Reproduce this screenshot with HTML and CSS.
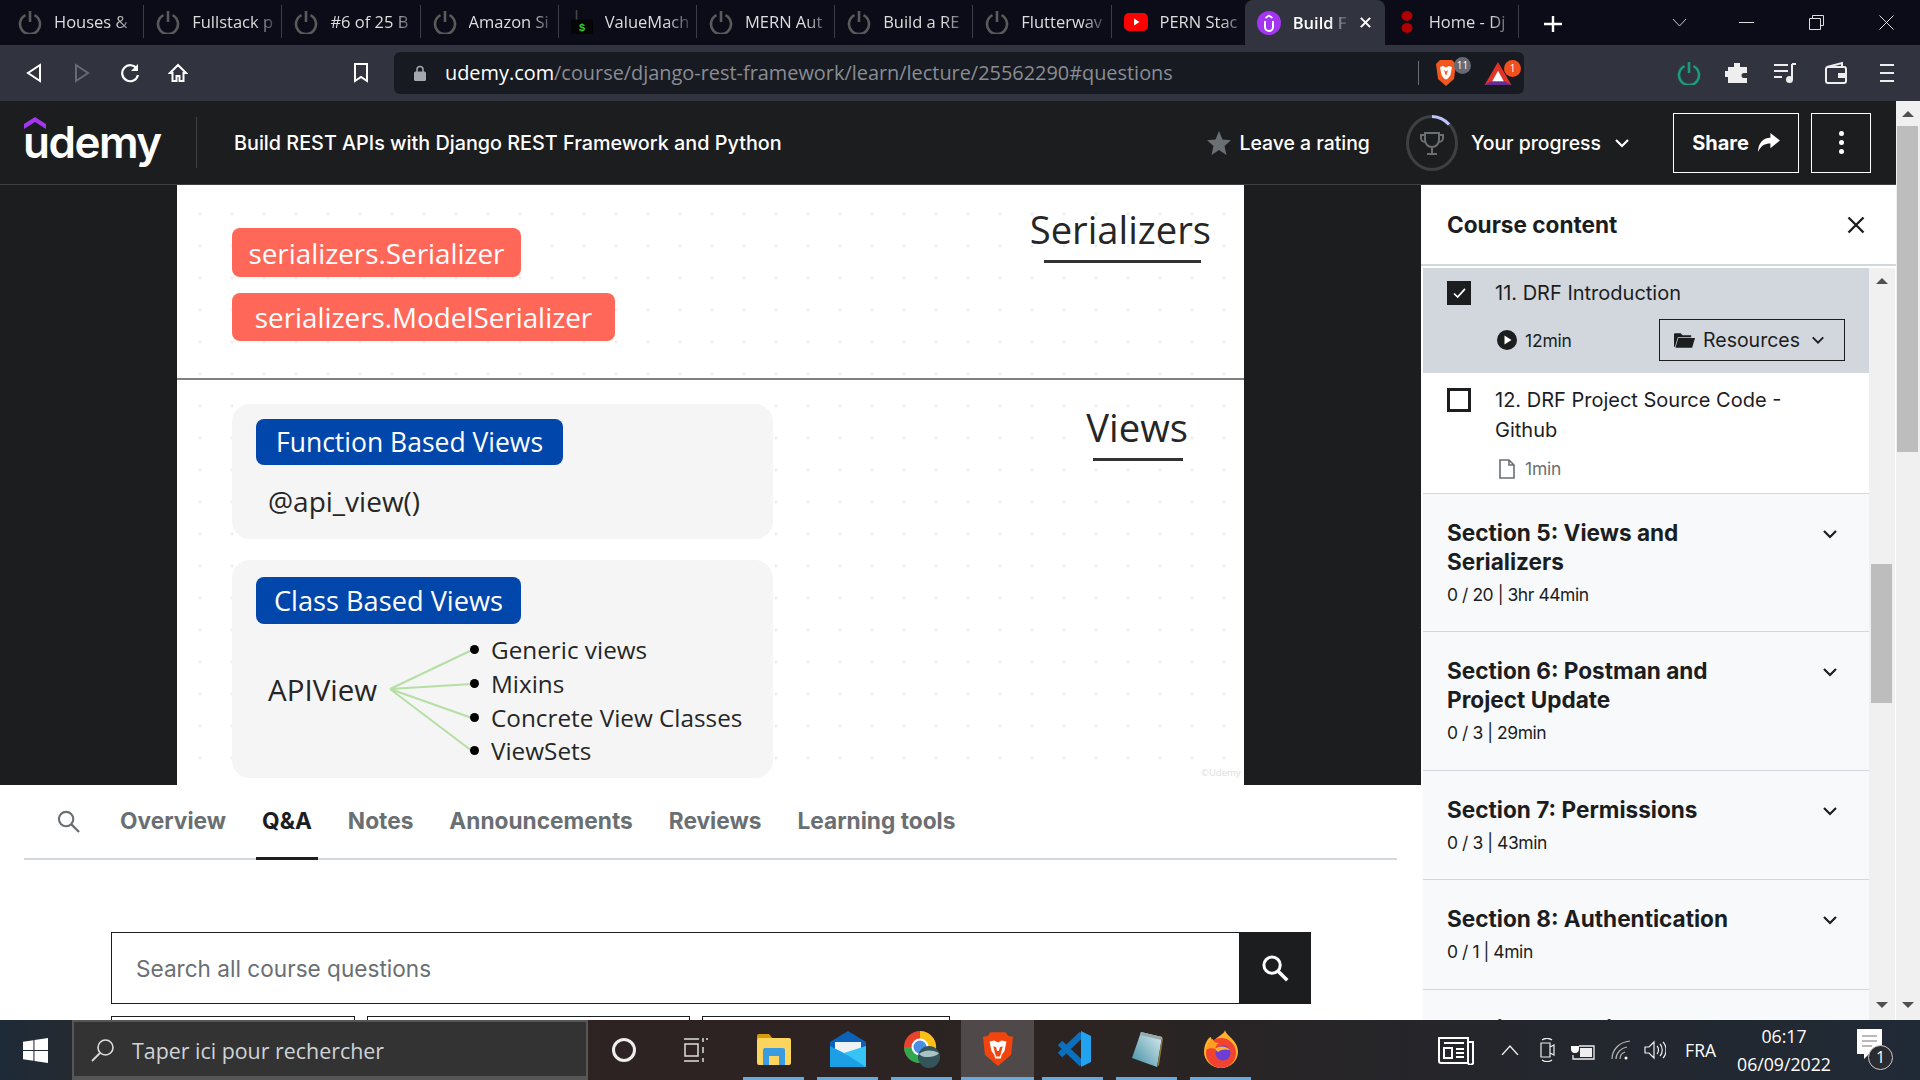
FILE: index.html
```html
<!DOCTYPE html>
<html lang="en">
<head>
    <meta charset="UTF-8">
    <meta name="viewport" content="width=device-width, initial-scale=1.0">
    <title>Build REST APIs with Django REST Framework and Python</title>
    <link rel="stylesheet" href="styles.css">
</head>
<body>
    <!-- icones reutilisees -->
    <svg class="defs" width="0" height="0">
        <symbol id="power" viewBox="0 0 24 24"><path d="M7.5 5.2a10 10 0 1 0 9 0" fill="none" stroke="currentColor" stroke-width="2.6"/><path d="M12 1v11" stroke="currentColor" stroke-width="2.6"/></symbol>
        <symbol id="chev" viewBox="0 0 16 10"><path d="M2 2l6 6 6-6" fill="none" stroke="currentColor" stroke-width="2.2"/></symbol>
    </svg>

    <div class="tabstrip">
        <div class="tab"><svg class="tab-icon off"><use href="#power"/></svg><span class="tab-title">Houses &amp;</span></div>
        <div class="tab"><svg class="tab-icon off"><use href="#power"/></svg><span class="tab-title">Fullstack p</span></div>
        <div class="tab"><svg class="tab-icon off"><use href="#power"/></svg><span class="tab-title">#6 of 25 B</span></div>
        <div class="tab"><svg class="tab-icon off"><use href="#power"/></svg><span class="tab-title">Amazon Si</span></div>
        <div class="tab"><svg class="tab-icon tab-term" viewBox="0 0 20 22"><path d="M5 0v9" stroke="#444" stroke-width="1.500"/><rect y="9" width="20" height="13" fill="#050505"/><text x="10" y="19.500" class="dollar">$</text></svg><span class="tab-title">ValueMach</span></div>
        <div class="tab"><svg class="tab-icon off"><use href="#power"/></svg><span class="tab-title">MERN Aut</span></div>
        <div class="tab"><svg class="tab-icon off"><use href="#power"/></svg><span class="tab-title">Build a RE</span></div>
        <div class="tab"><svg class="tab-icon off"><use href="#power"/></svg><span class="tab-title">Flutterwav</span></div>
        <div class="tab"><svg class="tab-icon" viewBox="0 0 24 24"><rect y="3" width="24" height="18" rx="5" fill="#f00"/><path d="M10 8.500l5.500 3.500-5.500 3.500z" fill="#fff"/></svg><span class="tab-title">PERN Stac</span></div>
        <div class="tab tab-active"><svg class="tab-icon" viewBox="0 0 24 24"><circle cx="12" cy="12" r="12" fill="#a435f0"/><path d="M8 10v6a4 4 0 0 0 8 0v-6" fill="none" stroke="#fff" stroke-width="2"/><path d="M8.500 7l3.500-2.500 3.500 2.500" fill="none" stroke="#fff" stroke-width="1.600"/></svg><span class="tab-title">Build F</span>
            <svg class="tab-close" viewBox="0 0 14 14"><path d="M2 2l10 10M12 2l-10 10" stroke="#fff" stroke-width="2.200"/></svg></div>
        <div class="tab tab-last"><svg class="tab-dots" viewBox="0 0 12 22"><ellipse cx="6" cy="5" rx="5.500" ry="5" fill="#b00000"/><ellipse cx="6" cy="17" rx="5.500" ry="5" fill="#b00000"/></svg><span class="tab-title">Home - Dj</span></div>
        <svg class="newtab" viewBox="0 0 18 16"><path d="M9 0v16M0 8h18" stroke="#fff" stroke-width="2.400"/></svg>
        <div class="caption">
            <svg class="cap-chev" viewBox="0 0 15 9"><path d="M1 1l6.500 7 6.500-7" fill="none" stroke="#ccc"/></svg>
            <svg class="cap-btn" viewBox="0 0 15 15"><path d="M0 7.500h15" stroke="#ddd"/></svg>
            <svg class="cap-btn" viewBox="0 0 15 15"><path d="M3.500 3V.5h11v10H12M.5 3.500h11v11H.5z" fill="none" stroke="#ddd"/></svg>
            <svg class="cap-btn" viewBox="0 0 15 15"><path d="M.5.5l14 14M14.500.5l-14 14" stroke="#ddd"/></svg>
        </div>
    </div>

    <div class="toolbar">
        <svg class="tb-nav" viewBox="0 0 18 20"><path d="M15 2L3 10l12 8z" fill="none" stroke="#fff" stroke-width="2"/></svg>
        <svg class="tb-nav" viewBox="0 0 18 20"><path d="M3 2l12 8-12 8z" fill="none" stroke="#666a75" stroke-width="2"/></svg>
        <svg class="tb-nav" viewBox="0 0 20 20"><path d="M17 6a8 8 0 1 0 1 6" fill="none" stroke="#fff" stroke-width="2.200"/><path d="M18 1v7h-7z" fill="#fff"/></svg>
        <svg class="tb-nav" viewBox="0 0 20 20"><path d="M10 2L2 10h2.500v8h4v-5h3v5h4v-8H18z" fill="none" stroke="#fff" stroke-width="2"/></svg>
        <svg class="tb-mark" viewBox="0 0 16 20"><path d="M2 1h12v17l-6-4-6 4z" fill="none" stroke="#fff" stroke-width="2"/></svg>
        <div class="urlbar">
            <svg class="lock" viewBox="0 0 12 16"><path d="M3 7V4.500a3 3 0 0 1 6 0V7" fill="none" stroke="#a5a7ad" stroke-width="1.500"/><rect y="6.500" width="12" height="9.500" rx="1.500" fill="#a5a7ad"/></svg>
            <span class="url"><b>udemy.com</b>/course/django-rest-framework/learn/lecture/25562290#questions</span>
            <span class="url-sep"></span>
            <div class="ext">
                <svg class="ext-lion" viewBox="0 0 22 28"><path d="M5 1h12l4 4-2 15-8 7-8-7L1 5z" fill="#f1571f"/><path d="M5 8l3-1 3 1.500L14 7l3 1-1.500 8-2.500 3.500-2 1-2-1L6.500 16z" fill="#fff"/><path d="M9 11l2 1.500 2-1.500-2 6z" fill="#f1571f"/></svg>
                <span class="ext-badge badge-grey">11</span>
            </div>
            <div class="ext">
                <svg class="ext-tri" viewBox="0 0 28 24"><path d="M14 0l14 24H0z" fill="#e0342a"/><path d="M0 24l7-4h14l7 4z" fill="#662d91"/><path d="M14 9l6 11H8z" fill="#fff"/></svg>
                <span class="ext-badge badge-orange">1</span>
            </div>
        </div>
        <svg class="tb-power"><use href="#power"/></svg>
        <svg class="tb-icon" viewBox="0 0 24 24"><path d="M9 2h6v4h7v6h-3a2.500 2.500 0 0 0 0 5h3v5H3v-6H1a3 3 0 0 1 0-6h2V6h6z" fill="#eee"/></svg>
        <svg class="tb-icon tb-list" viewBox="0 0 24 24"><path d="M1 4h14M1 10h14M1 16h8" stroke="#eee" stroke-width="2"/><path d="M19 3h4M19 3v15" stroke="#eee" stroke-width="2" fill="none"/><circle cx="16.500" cy="18.500" r="3.500" fill="#eee"/></svg>
        <svg class="tb-icon" viewBox="0 0 24 24"><path d="M3 6l15-4v4M2 8a2 2 0 0 1 2-2h16a2 2 0 0 1 2 2v12a2 2 0 0 1-2 2H4a2 2 0 0 1-2-2z" fill="none" stroke="#eee" stroke-width="2"/><path d="M14 12h9v5h-9z" fill="#eee"/></svg>
        <svg class="tb-menu" viewBox="0 0 14 20"><path d="M0 2h14M0 10h14M0 18h14" stroke="#eee" stroke-width="2.200"/></svg>
    </div>

    <div class="page">
        <div class="page-main">
            <header class="course-bar">
                <div class="logo">
                    <svg class="logo-mark" viewBox="0 0 22 12"><path d="M11 0l11 7v5L11 5 0 12V7z" fill="#a435f0"/></svg>
                    <span class="logo-word">udemy</span>
                </div>
                <h1 class="course-title">Build REST APIs with Django REST Framework and Python</h1>
                <span class="bar-link rating"><svg class="star" viewBox="0 0 24 24"><path d="M12 0l3.500 8.500 8.500.7-6.500 5.700 2 9L12 19l-7.500 4.900 2-9L0 9.200l8.500-.7z" fill="#6a6f73"/></svg>Leave a rating</span>
                <svg class="ring" viewBox="0 0 52 56">
                    <ellipse cx="26" cy="28" rx="24.500" ry="26.500" fill="none" stroke="#3e4143" stroke-width="3"/>
                    <path d="M26 1.500a24.500 26.500 0 0 1 17 8" fill="none" stroke="#c0c4fc" stroke-width="3"/>
                    <path d="M19 18h14v7a7 7 0 0 1-14 0zM26 32v6M21 39h10M19 20h-4v3a4 4 0 0 0 4 4M33 20h4v3a4 4 0 0 1-4 4" fill="none" stroke="#6a6f73" stroke-width="2"/>
                </svg>
                <span class="bar-link progress">Your progress<svg class="bar-chev"><use href="#chev"/></svg></span>
                <button class="btn-share">Share<svg class="share-arrow" viewBox="0 0 24 20"><path d="M14 0l10 8-10 8v-5C8 11 4 13 1 20 1 11 6 5 14 5z" fill="#fff"/></svg></button>
                <button class="btn-more"><i></i><i></i><i></i></button>
            </header>

            <div class="content">
                <div class="left">
                    <div class="video">
                        <div class="slide">
                            <section class="slide-part part-top">
                                <div class="slide-col">
                                    <div class="pill pill-red pill-a">serializers.Serializer</div>
                                    <div class="pill pill-red pill-b">serializers.ModelSerializer</div>
                                </div>
                                <div class="slide-head head-a">Serializers</div>
                            </section>
                            <section class="slide-part part-bottom">
                                <div class="slide-col">
                                    <div class="panel panel-a">
                                        <div class="pill pill-blue pill-c">Function Based Views</div>
                                        <div class="api-view">@api_view()</div>
                                    </div>
                                    <div class="panel panel-b">
                                        <div class="pill pill-blue pill-d">Class Based Views</div>
                                        <div class="tree">
                                            <span class="tree-root">APIView</span>
                                            <svg class="tree-lines" viewBox="0 0 90 110"><path d="M2 44L84 5M2 44l82-5M2 44l82 29M2 44l82 62" fill="none" stroke="#b5dfa4" stroke-width="2"/></svg>
                                            <ul class="tree-list">
                                                <li>Generic views</li>
                                                <li>Mixins</li>
                                                <li>Concrete View Classes</li>
                                                <li>ViewSets</li>
                                            </ul>
                                        </div>
                                    </div>
                                </div>
                                <div class="slide-head head-b">Views</div>
                            </section>
                            <span class="watermark">©Udemy</span>
                        </div>
                    </div>

                    <nav class="course-tabs">
                        <svg class="tabs-search" viewBox="0 0 24 24"><circle cx="9.500" cy="9.500" r="7.500" fill="none" stroke="#6a6f73" stroke-width="2.200"/><path d="M15 15l8 8" stroke="#6a6f73" stroke-width="2.400"/></svg>
                        <a class="ctab">Overview</a>
                        <a class="ctab ctab-active">Q&amp;A</a>
                        <a class="ctab">Notes</a>
                        <a class="ctab">Announcements</a>
                        <a class="ctab">Reviews</a>
                        <a class="ctab">Learning tools</a>
                    </nav>

                    <div class="qa">
                        <div class="qa-search">
                            <span class="qa-input">Search all course questions</span>
                            <span class="qa-btn"><svg viewBox="0 0 24 24" width="28" height="28"><circle cx="9.500" cy="9.500" r="7" fill="none" stroke="#fff" stroke-width="2.600"/><path d="M14.500 14.500l8 8" stroke="#fff" stroke-width="3"/></svg></span>
                        </div>
                        <div class="qa-filters">
                            <span class="filter f1"></span>
                            <span class="filter f2"></span>
                            <span class="filter f3"></span>
                        </div>
                    </div>
                </div>

                <aside class="sidebar">
                    <div class="side-head">
                        <h2>Course content</h2>
                        <svg class="side-close" viewBox="0 0 18 18"><path d="M1.500 1.500l15 15M16.500 1.500l-15 15" stroke="#1c1d1f" stroke-width="2.400"/></svg>
                    </div>
                    <div class="side-body">
                        <div class="side-list">
                            <div class="lecture lecture-on">
                                <span class="check check-on"><svg viewBox="0 0 14 12" width="13" height="11"><path d="M1 6l4 4 8-9" fill="none" stroke="#fff" stroke-width="1.800"/></svg></span>
                                <div class="lecture-text">
                                    <div class="lecture-name">11. DRF Introduction</div>
                                    <div class="lecture-meta">
                                        <span class="meta-dur dark"><svg viewBox="0 0 20 20" width="20" height="20"><circle cx="10" cy="10" r="10" fill="#1c1d1f"/><path d="M7.500 5.500l7 4.500-7 4.500z" fill="#fff"/></svg>12min</span>
                                        <span class="res-btn"><svg viewBox="0 0 22 16" width="21" height="16"><path d="M0 2a1 1 0 0 1 1-1h6l2 2h9v2H4L1 15H0z" fill="#1c1d1f"/><path d="M4.500 6H22l-3 10H1.500z" fill="#1c1d1f"/></svg>Resources<svg class="res-chev"><use href="#chev"/></svg></span>
                                    </div>
                                </div>
                            </div>
                            <div class="lecture">
                                <span class="check"></span>
                                <div class="lecture-text">
                                    <div class="lecture-name">12. DRF Project Source Code - Github</div>
                                    <div class="lecture-meta">
                                        <span class="meta-dur"><svg class="file-icon" viewBox="0 0 16 20" width="16" height="20"><path d="M1 1h9l5 5v13H1zM10 1v5h5" fill="none" stroke="#6a6f73" stroke-width="1.600"/></svg>1min</span>
                                    </div>
                                </div>
                            </div>
                            <div class="section"><div><h3>Section 5: Views and Serializers</h3><p>0 / 20 | 3hr 44min</p></div><svg class="sec-chev"><use href="#chev"/></svg></div>
                            <div class="section"><div><h3>Section 6: Postman and Project Update</h3><p>0 / 3 | 29min</p></div><svg class="sec-chev"><use href="#chev"/></svg></div>
                            <div class="section"><div><h3>Section 7: Permissions</h3><p>0 / 3 | 43min</p></div><svg class="sec-chev"><use href="#chev"/></svg></div>
                            <div class="section"><div><h3>Section 8: Authentication</h3><p>0 / 1 | 4min</p></div><svg class="sec-chev"><use href="#chev"/></svg></div>
                            <div class="section"><div><h3>Section 9: Redis</h3></div><svg class="sec-chev"><use href="#chev"/></svg></div>
                        </div>
                        <div class="scrollbar side-scroll">
                            <i class="arrow-up"></i><i class="thumb side-thumb"></i><i class="arrow-down"></i>
                        </div>
                    </div>
                </aside>
            </div>
        </div>
        <div class="scrollbar page-scroll">
            <i class="arrow-up"></i><i class="thumb page-thumb"></i><i class="arrow-down"></i>
        </div>
    </div>

    <footer class="taskbar">
        <div class="start"><svg viewBox="0 0 24 24" width="25" height="25"><path d="M0 3.500l10-1.400V11.500H0zM11 2l13-2v11.500H11zM0 12.500h10v9.400L0 20.500zM11 12.500h13V24l-13-1.900z" fill="#fff"/></svg></div>
        <div class="win-search">
            <svg viewBox="0 0 24 24" width="24" height="24"><circle cx="14.500" cy="9.500" r="7.500" fill="none" stroke="#ddd" stroke-width="1.600"/><path d="M9 15l-8 8" stroke="#ddd" stroke-width="1.800"/></svg>
            <span>Taper ici pour rechercher</span>
        </div>
        <span class="cortana"></span>
        <svg class="taskview" viewBox="0 0 24 24"><path d="M0 1h15M0 23h15M1 6h13v12H1zM19 0v4M19 9v6M19 20v4M22 1h2" fill="none" stroke="#ddd" stroke-width="1.500"/></svg>
        <div class="app app-on"><svg viewBox="0 0 34 32" width="34" height="32"><path d="M0 3a2 2 0 0 1 2-2h10l4 5H0z" fill="#d99a0c"/><rect y="5" width="34" height="27" rx="2" fill="#fcd55f"/><path d="M6 32V17a2 2 0 0 1 2-2h18a2 2 0 0 1 2 2v15h-6v-9H12v9z" fill="#3a9be0"/></svg></div>
        <div class="app app-on"><svg viewBox="0 0 36 36" width="36" height="36"><path d="M18 0l18 11v25H0V11z" fill="#0b62b8"/><path d="M5 11h26v8L18 25 5 19z" fill="#eef3f6"/><path d="M0 15l18 9 18-9v21H0z" fill="#1d9fe6"/><path d="M36 15v21L14 22z" fill="#34c5f6"/></svg></div>
        <div class="app app-on"><svg viewBox="0 0 38 38" width="38" height="38"><circle cx="17" cy="17" r="16" fill="#e8432f"/><path d="M17 17L3.100 25A16 16 0 0 0 24 31.400L17 17z" fill="#2da94f"/><path d="M17 1a16 16 0 0 1 14.500 23L17 17z" fill="#fbc116"/><path d="M17 17L1 17A16 16 0 0 0 3.100 25z" fill="#2da94f"/><circle cx="17" cy="17" r="7.500" fill="#4a8fe6" stroke="#fff" stroke-width="2"/><circle cx="26" cy="27" r="11" fill="#34545c"/><path d="M16 24c5-4 12-5 20-1-2 3-8 4-11 4-3 0-6 0-9-3z" fill="#a9c4c4"/></svg></div>
        <div class="app app-on app-cur"><svg viewBox="0 0 32 36" width="30" height="36"><path d="M8 0h16l3 4 5 1-2 19-14 12L2 24 0 5l5-1z" fill="#f1440f"/><path d="M7 10l5-1 4 2 4-2 5 1-2 10-3 4-1 4h-6l-1-4-3-4z" fill="#fff"/><path d="M11 15l3 1 1 4h2l1-4 3-1-2 8-1 3h-4l-1-3z" fill="#f1440f"/></svg></div>
        <div class="app app-on"><svg viewBox="0 0 36 36" width="36" height="36"><path d="M27 3L5 24" stroke="#0b6fbb" stroke-width="6.500"/><path d="M5 12l22 21" stroke="#0b6fbb" stroke-width="6.500"/><path d="M26 0l10 5v26l-10 5z" fill="#22a2ef"/></svg></div>
        <div class="app app-on"><svg viewBox="0 0 32 36" width="32" height="36"><defs><linearGradient id="pad" x1="0" y1="1" x2="1" y2="0"><stop offset="0" stop-color="#3f8ea3"/><stop offset="1" stop-color="#dfeef2"/></linearGradient></defs><path d="M10 1l21 5-5 30-25-9z" fill="url(#pad)"/><path d="M26 36l5-30 1 2-4 26z" fill="#8a7a3a"/><path d="M10 1l21 5-1 3-21-5z" fill="#9aa8ac"/></svg></div>
        <div class="app app-on"><svg viewBox="0 0 34 38" width="34" height="38"><path d="M21 0c1 6 13 10 13 22a17 16 0 0 1-34 0C0 13 5 7 7 7c0 3 3 5 3 5 2-6 10-7 11-12z" fill="#ffb02e"/><circle cx="17" cy="23" r="15" fill="#f2432f"/><path d="M2 20C3 12 8 9 9 9c0 3 3 4 6 4-3 2-4 4-3 6-4-1-7-1-10 1z" fill="#ff9f1f"/><circle cx="19" cy="23" r="7.500" fill="#6b3fd4"/><path d="M11 19c4-4 12-3 15 1-4-1-9-1-12 2z" fill="#ffb02e"/></svg></div>
        <div class="tray">
            <svg class="tray-news" viewBox="0 0 36 30"><path d="M1 3h29v25H3a2 2 0 0 1-2-2zM30 7h5v19a2 2 0 0 1-5 2" fill="none" stroke="#fff" stroke-width="2"/><path d="M6 8h20M6 13h8v10H6zM18 14h8M18 18h8M18 22h8" fill="none" stroke="#fff" stroke-width="2"/></svg>
            <svg class="tray-up" viewBox="0 0 18 10"><path d="M1 10l8-9 8 9" fill="none" stroke="#eee" stroke-width="1.300"/></svg>
            <svg class="tray-cam" viewBox="0 0 16 24"><path d="M2 5h9v14H2zM11 9l4-2v10l-4-2M3 2c3-2 7-2 10 0M3 22c3 2 7 2 10 0" fill="none" stroke="#eee" stroke-width="1.200"/></svg>
            <svg class="tray-bat" viewBox="0 0 26 20"><path d="M3 0v6M7 0v6M1 6h8v3a4 4 0 0 1-8 0z" fill="#fff"/><path d="M9 6h15v13H3v-4" fill="none" stroke="#eee" stroke-width="1.300"/><rect x="10" y="8" width="12" height="9" fill="#eee"/></svg>
            <svg class="tray-wifi" viewBox="0 0 20 20"><path d="M1 19C1 10 8 2 19 1M5 19c0-6 5-11 11-12M9 19c0-4 2-6 5-7" fill="none" stroke="#bbb" stroke-width="1.200"/><circle cx="15" cy="18" r="1.500" fill="#fff"/></svg>
            <svg class="tray-vol" viewBox="0 0 22 20"><path d="M1 7h4l5-5v16l-5-5H1zM13 6c2 2 2 6 0 8M16 4c3 3 3 9 0 12M19 2c4 4 4 12 0 16" fill="none" stroke="#eee" stroke-width="1.200"/></svg>
            <span class="tray-lang">FRA</span>
            <div class="clock"><span>06:17</span><span>06/09/2022</span></div>
            <div class="notif">
                <svg viewBox="0 0 25 30" width="25" height="30"><path d="M0 0h25v25H12l-5 5v-5H0z" fill="#fff"/><path d="M5 7h15M5 12h15M5 17h10" stroke="#777" stroke-width="1.200"/></svg>
                <span class="notif-badge">1</span>
            </div>
        </div>
    </footer>
</body>
</html>
```

FILE: styles.css
```css
* {
    box-sizing: border-box;
}
html, body {
    margin: 0;
    width: 1920px;
    height: 1080px;
    overflow: hidden;
}
body {
    display: flex;
    flex-direction: column;
    font-family: Inter, "Liberation Sans", sans-serif;
    color: #1c1d1f;
    background: #fff;
}
.defs {
    position: absolute;
}
h1, h2, h3, p, ul {
    margin: 0;
    padding: 0;
}

/* onglets du navigateur */
.tabstrip {
    flex: none;
    height: 45px;
    background: #0b0c18;
    display: flex;
    align-items: stretch;
    padding-left: 6px;
    font-family: "Open Sans", sans-serif;
    font-size: 16.5px;
    color: #ddd;
}
.tab {
    width: 138.2px;
    display: flex;
    align-items: center;
    gap: 12px;
    padding-left: 12px;
    position: relative;
    border-right: 1px solid #3a3c46;
    margin: 5px 0 7px;
}
.tab-icon {
    flex: none;
    width: 24px;
    height: 24px;
}
.tab-icon.off {
    color: #5a5a5a;
}
.tab-term {
    width: 22px;
}
.tab-dots {
    flex: none;
    width: 12px;
    height: 22px;
    margin: 0 4px;
}
.tab-title {
    flex: 1;
    min-width: 0;
    white-space: nowrap;
    -webkit-mask-image: linear-gradient(90deg, #000 68%, rgba(0, 0, 0, .25) 92%);
    mask-image: linear-gradient(90deg, #000 68%, rgba(0, 0, 0, .25) 92%);
}
.tab-active {
    width: 140px;
    margin: 0 0 0 -5px;
    background: #31343f;
    border: 0;
    border-radius: 8px 8px 0 0;
    color: #fff;
    font-weight: 600;
    padding-right: 13px;
}
.tab-close {
    flex: none;
    width: 13px;
    height: 13px;
}
.tab-last {
    width: 134px;
}
.dollar {
    font: 700 10px "Liberation Mono", monospace;
    fill: #2fd12f;
    text-anchor: middle;
}
.newtab {
    width: 18px;
    height: 16px;
    margin: 16px 0 0 25px;
}
.caption {
    margin-left: auto;
    display: flex;
    align-items: center;
    gap: 55px;
    padding-right: 26px;
}
.cap-chev {
    width: 15px;
    height: 9px;
    margin-right: -3px;
}
.cap-btn {
    width: 15px;
    height: 15px;
}

/* barre d'adresse */
.toolbar {
    flex: none;
    height: 56px;
    background: #31343f;
    display: flex;
    align-items: center;
    padding-left: 24px;
}
.tb-nav {
    width: 20px;
    height: 20px;
    margin-right: 28px;
}
.tb-mark {
    width: 16px;
    height: 20px;
    margin-left: 137px;
}
.urlbar {
    width: 1130px;
    height: 42px;
    margin-left: 25px;
    background: #181a21;
    border-radius: 6px;
    display: flex;
    align-items: center;
    padding-left: 20px;
}
.lock {
    width: 12px;
    height: 16px;
}
.url {
    margin-left: 19px;
    padding-bottom: 2px;
    font-family: "Open Sans", sans-serif;
    font-size: 19.9px;
    color: #8a8d94;
    white-space: nowrap;
    width: 973px;
}
.url b {
    font-weight: 400;
    color: #fff;
}
.url-sep {
    width: 1px;
    height: 24px;
    background: #6a6d75;
}
.ext {
    position: relative;
    margin-left: 16px;
    display: flex;
}
.ext + .ext {
    margin-left: 27px;
}
.ext-lion {
    width: 22px;
    height: 28px;
}
.ext-tri {
    width: 28px;
    height: 23px;
}
.ext-badge {
    position: absolute;
    top: -2px;
    right: -14px;
    width: 17px;
    height: 17px;
    border-radius: 50%;
    font: 10px "Open Sans", sans-serif;
    color: #fff;
    text-align: center;
    line-height: 17px;
}
.badge-grey {
    background: #666a75;
}
.badge-orange {
    background: #f1501c;
    right: -9px;
}
.tb-power {
    width: 24px;
    height: 24px;
    color: #1a9b7b;
    margin-left: 153px;
}
.tb-icon {
    width: 24px;
    height: 24px;
    margin-left: 24px;
}
.tb-icon + .tb-icon {
    margin-left: 27px;
}
.tb-icon + .tb-list {
    margin-left: 24px;
}
.tb-menu {
    width: 14px;
    height: 20px;
    margin-left: 32px;
}

/* page */
.page {
    flex: none;
    height: 919px;
    display: flex;
}
.page-main {
    flex: 1;
    min-width: 0;
    display: flex;
    flex-direction: column;
}
.course-bar {
    flex: none;
    height: 84px;
    background: #1c1d1f;
    border-bottom: 1px solid #3e4143;
    display: flex;
    align-items: center;
    color: #fff;
    font-size: 19.4px;
    font-weight: 500;
}
.logo {
    width: 174px;
    height: 51px;
    margin-left: 23px;
    border-right: 1px solid #3e4143;
    position: relative;
    display: flex;
    align-items: flex-end;
}
.logo-mark {
    position: absolute;
    left: 1px;
    top: 0;
    width: 22px;
    height: 12px;
}
.logo-word {
    font-size: 44px;
    font-weight: 600;
    line-height: 50px;
    letter-spacing: -1.5px;
    margin-bottom: 1px;
}
.course-title {
    font-size: 19.8px;
    font-weight: 500;
    margin-left: 37px;
    white-space: nowrap;
}
.bar-link {
    display: flex;
    align-items: center;
    white-space: nowrap;
}
.rating {
    margin-left: auto;
    gap: 8px;
}
.star {
    width: 26px;
    height: 24px;
}
.ring {
    width: 52px;
    height: 56px;
    margin-left: 36px;
}
.progress {
    margin-left: 13px;
}
.bar-chev {
    width: 16px;
    height: 10px;
    margin-left: 13px;
}
.btn-share {
    width: 126px;
    height: 60px;
    margin-left: 43px;
    background: none;
    border: 1px solid #fff;
    color: #fff;
    font: 700 20px Inter, sans-serif;
    display: flex;
    align-items: center;
    justify-content: center;
    gap: 8px;
}
.share-arrow {
    width: 23px;
    height: 19px;
}
.btn-more {
    width: 60px;
    height: 60px;
    margin: 0 25px 0 12px;
    background: none;
    border: 1px solid #fff;
    display: flex;
    flex-direction: column;
    align-items: center;
    justify-content: center;
    gap: 4px;
    padding: 0;
}
.btn-more i {
    width: 5px;
    height: 5px;
    border-radius: 50%;
    background: #fff;
}
.content {
    flex: 1;
    min-height: 0;
    display: flex;
}
.left {
    width: 1421px;
    flex: none;
    overflow: hidden;
}

/* video : la diapo */
.video {
    height: 600px;
    background: #1c1d1f;
    display: flex;
    justify-content: center;
}
.slide {
    width: 1067px;
    height: 600px;
    position: relative;
    background-color: #fff;
    background-image: radial-gradient(circle at 2px 2px, #ececec 1.2px, transparent 1.8px);
    background-size: 32px 32px;
    background-position: 21px 27px;
    font-family: "Open Sans", sans-serif;
    overflow: hidden;
}
.slide-part {
    display: flex;
    justify-content: space-between;
    padding-left: 55px;
}
.part-top {
    height: 195px;
    border-bottom: 2px solid #808080;
    padding-top: 43px;
}
.part-bottom {
    padding-top: 24px;
}
.slide-col {
    display: flex;
    flex-direction: column;
    align-items: flex-start;
}
.pill {
    color: #fff;
    border-radius: 8px;
    font-size: 27px;
    display: flex;
    align-items: center;
    justify-content: center;
    white-space: nowrap;
}
.pill-red {
    background: #ff6859;
    font-size: 27.8px;
}
.pill-a {
    width: 289px;
    height: 49px;
}
.pill-b {
    width: 383px;
    height: 48px;
    margin-top: 16px;
}
.pill-blue {
    background: #0147ab;
}
.pill-c {
    width: 307px;
    height: 46px;
    font-size: 26.5px;
}
.pill-d {
    width: 265px;
    height: 47px;
    font-size: 27.2px;
}
.panel {
    width: 541px;
    background: #f5f5f5;
    border-radius: 18px;
    padding-left: 24px;
}
.panel-a {
    height: 135px;
    padding-top: 15px;
}
.panel-b {
    height: 218px;
    margin-top: 21px;
    padding-top: 17px;
}
.api-view {
    margin: 16px 0 0 12px;
    font-size: 28px;
    line-height: 40px;
    color: #262626;
}
.tree {
    display: flex;
    align-items: center;
    margin-top: 9px;
    padding-left: 12px;
    color: #262626;
}
.tree-root {
    font-size: 29.5px;
    width: 122px;
    margin-bottom: 23px;
}
.tree-lines {
    position: absolute;
    left: 211px;
    top: 460px;
    width: 90px;
    height: 110px;
}
.tree-list {
    list-style: none;
    margin-left: 101px;
    font-size: 24.3px;
    line-height: 33.8px;
    white-space: nowrap;
}
.tree-list li {
    position: relative;
}
.tree-list li::before {
    content: "";
    position: absolute;
    left: -21px;
    top: 12px;
    width: 9px;
    height: 9px;
    border-radius: 50%;
    background: #000;
}
.slide-head {
    font-size: 38.2px;
    line-height: 53px;
    height: 53px;
    color: #262626;
    text-align: center;
    white-space: nowrap;
    position: relative;
    align-self: flex-start;
}
.slide-head::after {
    content: "";
    position: absolute;
    bottom: -6.5px;
    height: 3px;
    background: #333;
}
.head-a {
    margin: -25px 33px 0 0;
}
.head-a::after {
    left: 14px;
    right: 10px;
}
.head-b {
    margin: -3px 56px 0 0;
}
.head-b::after {
    left: 7px;
    right: 5px;
}
.watermark {
    position: absolute;
    left: 1024px;
    top: 581px;
    font-size: 9.5px;
    color: #ddd;
}

/* onglets du cours */
.course-tabs {
    height: 75px;
    margin: 0 24px;
    border-bottom: 2px solid #d1d7dc;
    display: flex;
    align-items: stretch;
    font-size: 22.7px;
    font-weight: 700;
    color: #6a6f73;
    padding-left: 33px;
}
.tabs-search {
    width: 23px;
    height: 23px;
    margin: 25px 34px 0 0;
}
.ctab {
    padding: 0 6px 1px;
    margin-right: 24px;
    display: flex;
    align-items: center;
    margin-bottom: -2px;
    border-bottom: 3px solid transparent;
    white-space: nowrap;
}
.ctab-active {
    color: #1c1d1f;
    border-bottom-color: #1c1d1f;
}
.qa {
    padding: 72px 0 0 111px;
}
.qa-search {
    width: 1200px;
    height: 72px;
    border: 1px solid #1c1d1f;
    display: flex;
    align-items: center;
}
.qa-input {
    flex: 1;
    padding-left: 24px;
    font-size: 22.6px;
    color: #6a6f73;
}
.qa-btn {
    width: 72px;
    height: 72px;
    background: #1c1d1f;
    display: flex;
    align-items: center;
    justify-content: center;
    margin-right: -1px;
}
.qa-filters {
    display: flex;
    gap: 12px;
    margin-top: 12px;
}
.filter {
    height: 60px;
    border: 1px solid #1c1d1f;
}
.f1 {
    width: 244px;
}
.f2 {
    width: 323px;
}
.f3 {
    width: 248px;
}

/* panneau de droite */
.sidebar {
    flex: 1;
    min-width: 0;
    display: flex;
    flex-direction: column;
    padding-left: 2px;
    padding-right: 1px;
    overflow: hidden;
}
.side-head {
    flex: none;
    height: 81px;
    margin-left: -2px;
    margin-right: -1px;
    padding: 0 31px 0 26px;
    border-bottom: 2px solid #d1d7dc;
    display: flex;
    align-items: center;
    justify-content: space-between;
}
.side-head h2 {
    font-size: 22.6px;
    font-weight: 700;
}
.side-close {
    width: 18px;
    height: 18px;
}
.side-body {
    flex: 1;
    min-height: 0;
    display: flex;
    padding-top: 2px;
}
.side-list {
    flex: 1;
    min-width: 0;
    overflow: hidden;
}
.lecture {
    display: flex;
    padding: 15px 24px 0;
    background: #fff;
    gap: 24px;
    border-bottom: 1px solid #d1d7dc;
    height: 121px;
}
.lecture-on {
    background: #d1d7dc;
    height: 105px;
    border-bottom: 0;
    padding-top: 13px;
}
.check {
    flex: none;
    width: 24px;
    height: 24px;
    border: 3px solid #1c1d1f;
    display: flex;
    align-items: center;
    justify-content: center;
}
.check-on {
    background: #1c1d1f;
}
.lecture-text {
    flex: 1;
    min-width: 0;
    margin-top: -3px;
}
.lecture-name {
    font-size: 20px;
    line-height: 30px;
    max-width: 300px;
}
.lecture-on .lecture-name {
    max-width: none;
}
.lecture-meta {
    display: flex;
    align-items: center;
    justify-content: space-between;
    margin-top: 13px;
}
.lecture-on .lecture-meta {
    margin-top: 11px;
}
.meta-dur {
    display: flex;
    align-items: center;
    gap: 8px;
    font-size: 17.5px;
    letter-spacing: -.2px;
    color: #6a6f73;
    padding-left: 2px;
}
.meta-dur.dark {
    color: #1c1d1f;
}
.file-icon {
    margin: 0 2px;
}
.res-btn {
    width: 186px;
    height: 42px;
    border: 1px solid #1c1d1f;
    display: flex;
    align-items: center;
    padding-left: 14px;
    gap: 8px;
    font-size: 19.5px;
}
.res-chev {
    width: 14px;
    height: 10px;
    margin-left: 3px;
}
.section {
    padding: 24px 31px 24.4px 24px;
    background: #f7f9fa;
    border-bottom: 1px solid #d1d7dc;
    display: flex;
    justify-content: space-between;
}
.section h3 {
    font-size: 22.6px;
    line-height: 29px;
    font-weight: 700;
    width: 320px;
}
.section p {
    font-size: 17.5px;
    letter-spacing: -.45px;
    line-height: 24px;
    margin-top: 7px;
}
.sec-chev {
    width: 16px;
    height: 10px;
    margin-top: 11px;
}

/* barres de defilement */
.scrollbar {
    position: relative;
    background: #f0f0f0;
    flex: none;
}
.side-scroll {
    width: 26px;
}
.page-scroll {
    width: 24px;
}
.thumb {
    position: absolute;
    background: #bdbdbd;
    left: 2px;
    right: 3px;
}
.side-thumb {
    top: 296px;
    height: 139px;
}
.page-thumb {
    top: 25px;
    height: 326px;
    left: 1px;
    right: 2px;
}
.arrow-up, .arrow-down {
    position: absolute;
    left: 50%;
    margin-left: -6px;
    width: 0;
    border: 6px solid transparent;
    border-top: 0;
    border-bottom: 6px solid #505050;
}
.arrow-up {
    top: 10px;
}
.arrow-down {
    bottom: 12px;
    transform: rotate(180deg);
}

/* barre des taches */
.taskbar {
    flex: none;
    height: 60px;
    background: linear-gradient(90deg, #1e2a38 0, #2a2a2c 120px, #2d2322 620px, #2b2422 1100px, #24262c 1500px, #202a36 100%);
    display: flex;
    align-items: center;
    color: #fff;
    font-family: "Open Sans", sans-serif;
}
.start {
    width: 72px;
    flex: none;
    display: flex;
    justify-content: center;
    padding-right: 2px;
}
.win-search {
    flex: none;
    width: 516px;
    height: 60px;
    background: #333;
    border: 2px solid #565656;
    border-bottom-width: 4px;
    display: flex;
    align-items: center;
    padding: 2px 0 0 17px;
    gap: 17px;
    font-size: 21.4px;
    color: #cfd3d8;
}
.cortana {
    width: 24px;
    height: 24px;
    margin-left: 24px;
    border-radius: 50%;
    border: 3px solid #eee;
}
.taskview {
    width: 24px;
    height: 24px;
    margin: 0 35px 0 48px;
}
.app {
    flex: none;
    width: 61px;
    height: 60px;
    margin-right: 13px;
    display: flex;
    align-items: center;
    justify-content: center;
    border-bottom: 3px solid transparent;
}
.app-on {
    border-bottom-color: #6aa9dc;
}
.app-cur {
    width: 73px;
    margin: 0 8px 0 -4px;
    background: #4f4a49;
}
.tray {
    margin-left: auto;
    display: flex;
    align-items: center;
    padding-right: 38px;
}
.tray-news {
    width: 36px;
    height: 30px;
    margin-right: 27px;
}
.tray-up {
    width: 18px;
    height: 10px;
    margin-right: 20px;
}
.tray-cam {
    width: 16px;
    height: 24px;
    margin-right: 15px;
}
.tray-bat {
    width: 26px;
    height: 20px;
    margin-right: 15px;
}
.tray-wifi {
    width: 20px;
    height: 20px;
    margin-right: 13px;
}
.tray-vol {
    width: 22px;
    height: 20px;
    margin-right: 19px;
}
.tray-lang {
    font-size: 17.5px;
}
.clock {
    display: flex;
    flex-direction: column;
    align-items: center;
    width: 120px;
    margin: 0 13px 0 8px;
    font-size: 17.7px;
    line-height: 28px;
}
.notif {
    position: relative;
    width: 25px;
    height: 40px;
    margin-bottom: 3px;
}
.notif-badge {
    position: absolute;
    left: 11px;
    top: 16px;
    width: 25px;
    height: 25px;
    border-radius: 50%;
    border: 1px solid #ccc;
    background: #2a2c30;
    font-size: 16px;
    line-height: 23px;
    text-align: center;
}
```
